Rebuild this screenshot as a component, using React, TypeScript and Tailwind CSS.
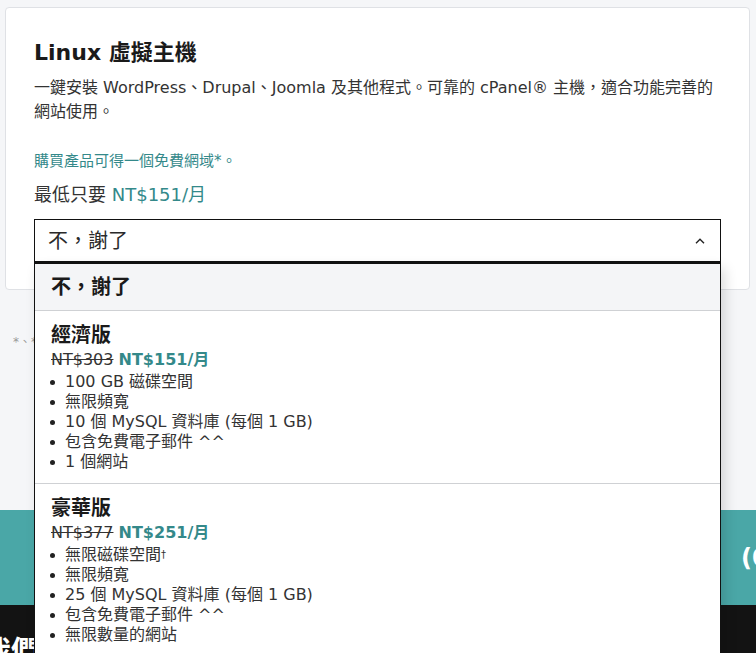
import React from "react";

const teal = "text-[#34898a]";

type Plan = {
  name: string;
  was: string;
  now: string;
  features: React.ReactNode[];
};

const plans: Plan[] = [
  {
    name: "經濟版",
    was: "NT$303",
    now: "NT$151/月",
    features: [
      "100 GB 磁碟空間",
      "無限頻寬",
      "10 個 MySQL 資料庫 (每個 1 GB)",
      "包含免費電子郵件 ^^",
      "1 個網站",
    ],
  },
  {
    name: "豪華版",
    was: "NT$377",
    now: "NT$251/月",
    features: [
      <>
        無限磁碟空間<sup className="relative -top-[2px] text-[10px]">†</sup>
      </>,
      "無限頻寬",
      "25 個 MySQL 資料庫 (每個 1 GB)",
      "包含免費電子郵件 ^^",
      "無限數量的網站",
    ],
  },
  {
    name: "尊榮版",
    was: "NT$526",
    now: "NT$401/月",
    features: ["無限磁碟空間", "無限頻寬", "無限 MySQL 資料庫"],
  },
];

function Chevron() {
  return (
    <svg width="10" height="6" viewBox="0 0 10 6" fill="none">
      <path d="M1 5.2L5 1.3L9 5.2" stroke="#222" strokeWidth="1.4" />
    </svg>
  );
}

function PlanOption({ plan }: { plan: Plan }) {
  return (
    <div className="border-b border-[#cfd1d4] pl-[16px] pr-4 pt-[11px] pb-[11px]">
      <div className="text-[20px] leading-[26px] font-bold text-[#1a1a1a]">{plan.name}</div>
      <div className="text-[16px] leading-[24px]">
        <span className="line-through text-[#333]">{plan.was}</span>{" "}
        <span className={`font-bold ${teal}`}>{plan.now}</span>
      </div>
      <ul className="text-[16px] leading-[20px] text-[#333]">
        {plan.features.map((f, i) => (
          <li key={i} className="flex items-center">
            <span className="-ml-[1px] mr-[10px] h-[5px] w-[5px] shrink-0 rounded-full bg-[#222]" />
            <span>{f}</span>
          </li>
        ))}
      </ul>
    </div>
  );
}

export default function App() {
  return (
    <div className="relative h-[653px] overflow-hidden bg-[#f5f6f8] font-[family-name:'DejaVu_Sans','Noto_Sans_CJK_TC',sans-serif] text-[#333]">
      {/* product card */}
      <div className="ml-[5px] mr-[6px] mt-[7px] h-[283px] rounded-[4px] border border-[#dfe1e5] bg-white px-[28px] pt-[30px]">
        <h2 className="text-[22px] leading-[30px] font-semibold text-[#1a1a1a]">Linux 虛擬主機</h2>
        <p className="mt-[8px] text-[16px] leading-[24px]">
          一鍵安裝 WordPress、Drupal、Joomla 及其他程式。可靠的 cPanel® 主機，適合功能完善的
          <br />
          網站使用。
        </p>
        <p className={`mt-[26px] text-[15px] leading-[22px] ${teal}`}>購買產品可得一個免費網域*。</p>
        <p className="mt-[11px] text-[18px] leading-[24px]">
          最低只要 <span className={teal}>NT$151/月</span>
        </p>

        <div className="relative z-10 mt-[12px]">
          <div className="flex h-[43px] items-center justify-between border border-[#111] bg-white pl-[13px] pr-[15px]">
            <span className="text-[20px] text-[#2a2a2a]">不，謝了</span>
            <Chevron />
          </div>
          <div className="absolute left-0 top-full w-full border-x border-t-2 border-x-[#111] border-t-[#111] bg-white shadow-[4px_6px_12px_rgba(0,0,0,0.14)]">
            <div className="flex h-[47px] items-center border-b border-[#cfd1d4] bg-[#f4f5f7] pl-[16px] text-[20px] font-bold text-[#1a1a1a]">
              不，謝了
            </div>
            {plans.map((p) => (
              <PlanOption key={p.name} plan={p} />
            ))}
          </div>
        </div>
      </div>

      {/* page content behind the open list */}
      <div className="h-[220px] pl-[13px] pt-[45px] text-[12px] leading-[14px] text-[#999]">*、*</div>
      <div className="flex h-[95px] items-center bg-[#4aa7a7] pl-[741px]">
        <span className="whitespace-nowrap text-[24px] font-bold text-white">(02)</span>
      </div>
      <div className="h-[60px] bg-[#131313] pt-[30px]">
        <span className="-ml-[17px] inline-block text-[28px] leading-[34px] font-bold text-white">我們</span>
      </div>
    </div>
  );
}
